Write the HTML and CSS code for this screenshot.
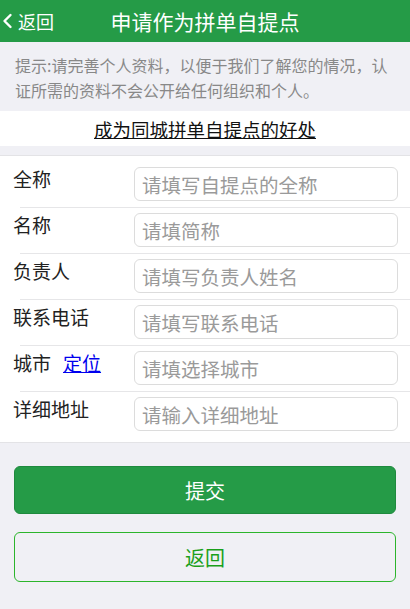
FILE: index.html
```html
<!DOCTYPE html>
<html lang="zh">
<head>
    <meta charset="UTF-8">
    <meta name="viewport" content="width=device-width, initial-scale=1.0">
    <title>申请作为拼单自提点</title>
    <link rel="stylesheet" href="styles.css">
</head>
<body>
    <div class="header">
        <a class="back" href="#">
            <svg class="chev" width="11" height="16" viewBox="0 0 11 16"><polyline points="8.5,2 2.5,8 8.5,14" fill="none" stroke="#fff" stroke-width="2.4" stroke-linecap="round" stroke-linejoin="round"/></svg>
            <span>返回</span>
        </a>
        <div class="title">申请作为拼单自提点</div>
        <div></div>
    </div>

    <div class="tip">提示:请完善个人资料，以便于我们了解您的情况，认证所需的资料不会公开给任何组织和个人。</div>

    <div class="benefit"><a href="#">成为同城拼单自提点的好处</a></div>

    <div class="form">
        <div class="row">
            <label class="label">全称</label>
            <input class="ipt" type="text" placeholder="请填写自提点的全称">
        </div>
        <div class="row">
            <label class="label">名称</label>
            <input class="ipt" type="text" placeholder="请填简称">
        </div>
        <div class="row">
            <label class="label">负责人</label>
            <input class="ipt" type="text" placeholder="请填写负责人姓名">
        </div>
        <div class="row">
            <label class="label">联系电话</label>
            <input class="ipt" type="text" placeholder="请填写联系电话">
        </div>
        <div class="row">
            <label class="label">城市<a class="locate" href="#">定位</a></label>
            <input class="ipt" type="text" placeholder="请填选择城市">
        </div>
        <div class="row">
            <label class="label">详细地址</label>
            <input class="ipt" type="text" placeholder="请输入详细地址">
        </div>
    </div>

    <div class="btns">
        <button class="btn submit">提交</button>
        <button class="btn cancel">返回</button>
    </div>
</body>
</html>
```

FILE: styles.css
```css
*{margin:0;padding:0;box-sizing:border-box;}
body{
    background:#f0f0f5;
    font-family:"Noto Sans CJK SC","Noto Sans",sans-serif;
    color:#222;
}
.header{
    height:42px;
    background:#259b47;
    display:grid;
    grid-template-columns:1fr auto 1fr;
    align-items:center;
    color:#fff;
}
.back{
    display:flex;
    align-items:center;
    color:#fff;
    text-decoration:none;
    font-size:18px;
    padding-left:2px;
}
.chev{margin-right:5px;}
.title{font-size:21px;}
.tip{
    padding:11px 15px 8px;
    font-size:16px;
    line-height:25px;
    color:#888;
}
.benefit{
    background:#fff;
    height:35px;
    display:flex;
    align-items:center;
    justify-content:center;
    margin-bottom:9px;
}
.benefit a{
    color:#111;
    font-size:18.5px;
    text-decoration:underline;
}
.form{
    background:#fff;
    border-top:1px solid #e3e3e6;
    border-bottom:1px solid #e3e3e6;
    padding:5px 0;
}
.row{
    display:flex;
    align-items:flex-start;
    padding:6px 12px 6px 13px;
}
.row + .row{
    background:linear-gradient(#e6e6e8,#e6e6e8) 20px 0 / 100% 1px no-repeat;
}
.label{
    width:121px;
    font-size:19px;
    line-height:24px;
    margin-top:0;
    color:#222;
}
.locate{
    color:#0000ee;
    text-decoration:underline;
    margin-left:12px;
}
.ipt{
    flex:1;
    height:34px;
    border:1px solid #dcdcdc;
    border-radius:6px;
    padding:0 7px;
    font-size:19.5px;
    font-family:inherit;
    color:#333;
    outline:none;
}
.ipt::placeholder{color:#9a9a9a;}
.btns{
    padding:23px 14px 0;
    display:flex;
    flex-direction:column;
    gap:18px;
}
.btn{
    width:100%;
    border-radius:6px;
    font-size:20px;
    font-family:inherit;
    cursor:pointer;
}
.submit{
    height:48px;
    background:#259b47;
    border:1px solid #1f8a3e;
    color:#fff;
}
.cancel{
    height:50px;
    background:transparent;
    border:1px solid #2cb52c;
    color:#1aa01a;
}
```
